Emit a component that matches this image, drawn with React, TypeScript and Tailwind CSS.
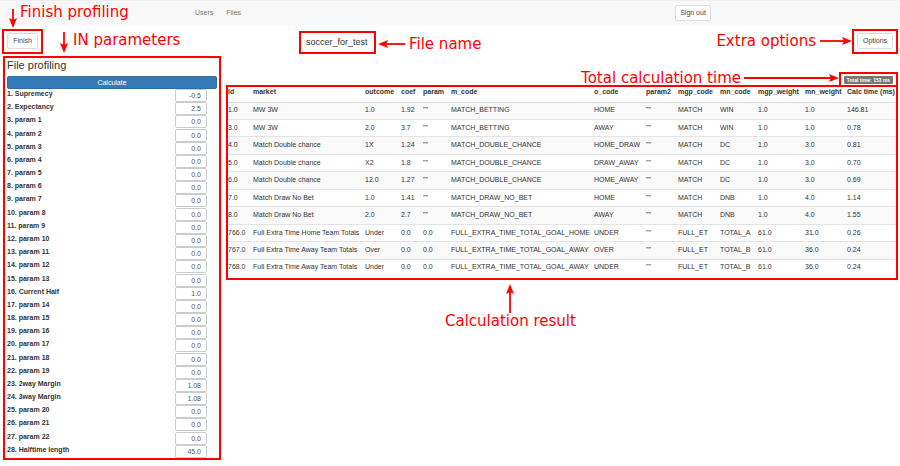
import React, { useState } from "react";

type Direction = "up" | "down" | "left" | "right";

const params: [string, string][] = [
  ["Supremecy", "-0.5"],
  ["Expectancy", "2.5"],
  ["param 1", "0.0"],
  ["param 2", "0.0"],
  ["param 3", "0.0"],
  ["param 4", "0.0"],
  ["param 5", "0.0"],
  ["param 6", "0.0"],
  ["param 7", "0.0"],
  ["param 8", "0.0"],
  ["param 9", "0.0"],
  ["param 10", "0.0"],
  ["param 11", "0.0"],
  ["param 12", "0.0"],
  ["param 13", "0.0"],
  ["Current Half", "1.0"],
  ["param 14", "0.0"],
  ["param 15", "0.0"],
  ["param 16", "0.0"],
  ["param 17", "0.0"],
  ["param 18", "0.0"],
  ["param 19", "0.0"],
  ["2way Margin", "1.08"],
  ["3way Margin", "1.08"],
  ["param 20", "0.0"],
  ["param 21", "0.0"],
  ["param 22", "0.0"],
  ["Halftime length", "45.0"],
];

const columns: { name: string; width: string }[] = [
  { name: "id", width: "w-[25px]" },
  { name: "market", width: "w-[112px]" },
  { name: "outcome", width: "w-[36px]" },
  { name: "coef", width: "w-[22px]" },
  { name: "param", width: "w-[28px]" },
  { name: "m_code", width: "w-[143px]" },
  { name: "o_code", width: "w-[52px]" },
  { name: "param2", width: "w-[32px]" },
  { name: "mgp_code", width: "w-[42px]" },
  { name: "mn_code", width: "w-[38px]" },
  { name: "mgp_weight", width: "w-[47px]" },
  { name: "mn_weight", width: "w-[42px]" },
  { name: "Calc time (ms)", width: "w-[49px]" },
];

const rows: string[][] = [
  ["1.0", "MW 3W", "1.0", "1.92", '""', "MATCH_BETTING", "HOME", '""', "MATCH", "WIN", "1.0", "1.0", "146.81"],
  ["3.0", "MW 3W", "2.0", "3.7", '""', "MATCH_BETTING", "AWAY", '""', "MATCH", "WIN", "1.0", "1.0", "0.78"],
  ["4.0", "Match Double chance", "1X", "1.24", '""', "MATCH_DOUBLE_CHANCE", "HOME_DRAW", '""', "MATCH", "DC", "1.0", "3.0", "0.81"],
  ["5.0", "Match Double chance", "X2", "1.8", '""', "MATCH_DOUBLE_CHANCE", "DRAW_AWAY", '""', "MATCH", "DC", "1.0", "3.0", "0.70"],
  ["6.0", "Match Double chance", "12.0", "1.27", '""', "MATCH_DOUBLE_CHANCE", "HOME_AWAY", '""', "MATCH", "DC", "1.0", "3.0", "0.69"],
  ["7.0", "Match Draw No Bet", "1.0", "1.41", '""', "MATCH_DRAW_NO_BET", "HOME", '""', "MATCH", "DNB", "1.0", "4.0", "1.14"],
  ["8.0", "Match Draw No Bet", "2.0", "2.7", '""', "MATCH_DRAW_NO_BET", "AWAY", '""', "MATCH", "DNB", "1.0", "4.0", "1.55"],
  ["766.0", "Full Extra Time Home Team Totals", "Under", "0.0", "0.0", "FULL_EXTRA_TIME_TOTAL_GOAL_HOME", "UNDER", '""', "FULL_ET", "TOTAL_A", "61.0", "31.0", "0.26"],
  ["767.0", "Full Extra Time Away Team Totals", "Over", "0.0", "0.0", "FULL_EXTRA_TIME_TOTAL_GOAL_AWAY", "OVER", '""', "FULL_ET", "TOTAL_B", "61.0", "36.0", "0.24"],
  ["768.0", "Full Extra Time Away Team Totals", "Under", "0.0", "0.0", "FULL_EXTRA_TIME_TOTAL_GOAL_AWAY", "UNDER", '""', "FULL_ET", "TOTAL_B", "61.0", "36.0", "0.24"],
];

function Arrow({ direction, length }: { direction: Direction; length: number }) {
  const vertical = direction === "up" || direction === "down";
  const w = vertical ? 8 : length;
  const h = vertical ? length : 8;
  const shapes: Record<Direction, { head: string; line: string }> = {
    down: { head: `M4 ${length}L0 ${length - 10}L4 ${length - 8}L8 ${length - 10}Z`, line: `M4 0V${length - 6}` },
    up: { head: "M4 0L0 10L4 8L8 10Z", line: `M4 6V${length}` },
    left: { head: "M0 4L10 0L8 4L10 8Z", line: `M6 4H${length}` },
    right: { head: `M${length} 4L${length - 10} 0L${length - 8} 4L${length - 10} 8Z`, line: `M0 4H${length - 6}` },
  };
  return (
    <svg width={w} height={h} viewBox={`0 0 ${w} ${h}`} className="block shrink-0" aria-hidden="true">
      <path d={shapes[direction].line} stroke="#ff0000" strokeWidth="1.8" fill="none" />
      <path d={shapes[direction].head} fill="#ff0000" />
    </svg>
  );
}

/* Red explanatory note floating over the page next to a framed region. */
function Callout({ place, children }: { place: string; children: React.ReactNode }) {
  return (
    <div
      className={`pointer-events-none absolute z-10 flex whitespace-nowrap font-['DejaVu_Sans',sans-serif] text-[15px] leading-[16px] font-normal text-[#ff0000] ${place}`}
    >
      {children}
    </div>
  );
}

const buttonClass =
  "h-4 rounded-[2px] border border-[#dddddd] bg-white text-[7px] leading-[14px] text-[#444444]";

export default function App() {
  const [values, setValues] = useState(params.map(([, v]) => v));

  return (
    <div className="flex min-h-screen flex-col bg-white font-['Liberation_Sans',Arial,sans-serif] text-[7px] leading-[10px] text-[#333333]">
      <nav className="flex h-[25px] items-center border-t border-[#eeeeee] bg-[#f8f8f8] pl-[195px] pr-[189px] text-[#777777]">
        <a href="#users">Users</a>
        <a href="#files" className="ml-[13px]">Files</a>
        <button type="button" className={`${buttonClass} ml-auto w-9`}>Sign out</button>
      </nav>

      <header className="flex h-[31px] items-start px-[2px] pt-[4px]">
        <div className="relative border-2 border-[#ff0000] px-[3px] pt-[2px] pb-[3px]">
          <button type="button" className={`${buttonClass} w-[31px]`}>Finish</button>
          <Callout place="left-[5px] bottom-[24px] items-start gap-[3px]">
            <div className="pt-[5px]"><Arrow direction="down" length={19} /></div>
            <span>Finish profiling</span>
          </Callout>
        </div>
        <h1 className="relative ml-[256px] mt-[2px] h-[23px] w-[77px] border-2 border-[#ff0000] pl-[5px] text-[9px] leading-[19px]">
          soccer_for_test
          <Callout place="left-[77px] top-[3px] items-center gap-[4px]">
            <Arrow direction="left" length={27} />
            <span>File name</span>
          </Callout>
        </h1>
        <div className="relative ml-auto border-2 border-[#ff0000] px-[3px] pt-[2px] pb-[3px]">
          <button type="button" className={`${buttonClass} w-9`}>Options</button>
          <Callout place="right-[44px] top-[2px] items-center gap-[4px]">
            <span>Extra options</span>
            <Arrow direction="right" length={32} />
          </Callout>
        </div>
      </header>

      <main className="flex flex-1">
        <form
          className="relative mb-[6px] ml-[3px] flex w-[218px] shrink-0 flex-col border-2 border-[#ff0000] px-[2px]"
          onSubmit={(e) => e.preventDefault()}
        >
          <Callout place="left-[55px] bottom-full mb-[5px] items-start gap-[5px]">
            <Arrow direction="down" length={21} />
            <span>IN parameters</span>
          </Callout>
          <h2 className="h-[18px] text-[11px] leading-[15px]">File profiling</h2>
          <button type="submit" className="h-[13px] rounded-[2px] border border-[#2e6da4] bg-[#337ab7] text-[7px] leading-[11px] text-white">
            Calculate
          </button>
          <div className="grid flex-1 auto-rows-fr">
            {params.map(([name], i) => (
              <div key={name} className="flex justify-between pr-[10px]">
                <label htmlFor={`param-${i}`} className="font-bold">{i + 1}. {name}</label>
                <input
                  id={`param-${i}`}
                  type="text"
                  value={values[i]}
                  onChange={(e) => setValues(values.map((v, j) => (j === i ? e.target.value : v)))}
                  className="h-[13px] w-8 rounded-[2px] border border-[#cccccc] bg-white pr-[5px] text-right text-[7px] leading-[11px] text-[#555555]"
                />
              </div>
            ))}
          </div>
        </form>

        <section className="flex min-w-0 flex-1 flex-col pl-[5px] pr-[2px] pt-[16px]">
          <div className="relative flex h-[15px] w-[59px] items-center justify-center self-end border-2 border-[#ff0000]">
            <span className="h-2 w-[49px] rounded-[1px] bg-[#777777] text-center text-[5px] leading-[8px] font-bold whitespace-nowrap text-white">
              Total time: 153 ms
            </span>
            <Callout place="right-[57px] -top-[4px] items-center gap-[3px]">
              <span>Total calculation time</span>
              <Arrow direction="right" length={95} />
            </Callout>
          </div>
          <div className="relative -mt-[2px] border-2 border-[#ff0000] pb-[2px]">
            <table className="h-[189px] w-full table-fixed border-collapse whitespace-nowrap">
              <colgroup>
                {columns.map((c) => (
                  <col key={c.name} className={c.width} />
                ))}
              </colgroup>
              <thead>
                <tr className="h-[15px] border-b border-[#dddddd]">
                  {columns.map((c) => (
                    <th key={c.name} scope="col" className="p-0 pb-[4px] text-left font-bold">{c.name}</th>
                  ))}
                </tr>
              </thead>
              <tbody>
                {rows.map((row) => (
                  <tr key={row[0]} className="border-t border-[#e4e4e4] odd:bg-[#f9f9f9]">
                    {row.map((cell, i) => (
                      <td key={columns[i].name} className="p-0 pb-[1px]">{cell}</td>
                    ))}
                  </tr>
                ))}
              </tbody>
            </table>
            <Callout place="left-[217px] top-full mt-[6px] flex-col items-center">
              <Arrow direction="up" length={29} />
              <span>Calculation result</span>
            </Callout>
          </div>
        </section>
      </main>
    </div>
  );
}
